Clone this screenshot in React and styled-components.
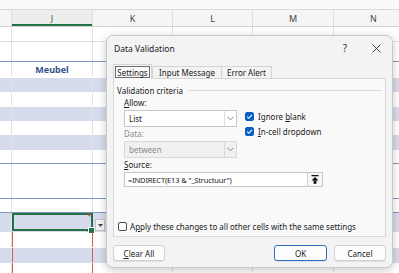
import React from 'react'
import styled, { createGlobalStyle } from 'styled-components'

const FONT = `"Noto Sans", "Open Sans", sans-serif`

const GlobalStyle = createGlobalStyle`
  html, body {
    margin: 0;
    padding: 0;
  }
  body {
    width: 399px;
    height: 273px;
    overflow: hidden;
    background: #ffffff;
    font-family: ${FONT};
  }
`

const COLS = [
  { key: '', w: 12 },
  { key: 'J', w: 81 },
  { key: 'K', w: 80 },
  { key: 'L', w: 80 },
  { key: 'M', w: 81 },
  { key: 'N', w: 80 },
]

const ROWS = [
  { h: 15, line: 'grid' },
  { h: 20, line: 'blue' },
  { h: 16, title: 'Meubel' },
  { h: 14, band: true },
  { h: 15 },
  { h: 14, band: true },
  { h: 14 },
  { h: 15, band: true },
  { h: 14, line: 'blue' },
  { h: 17 },
  { h: 18, line: 'blue' },
  { h: 14, line: 'blue' },
  { h: 19, band: true, active: true },
  { h: 16, marked: true },
  { h: 15, band: true, marked: true },
  { h: 12, marked: true },
]

function Check() {
  return (
    <svg width="9" height="9" viewBox="0 0 9 9">
      <path d="M2.2 4.7 L3.8 6.3 L6.9 2.9" fill="none" stroke="#fff" strokeWidth="1.1" />
    </svg>
  )
}

function Chevron() {
  return (
    <svg width="7" height="5" viewBox="0 0 7 5">
      <path d="M0.5 0.8 L3.5 3.8 L6.5 0.8" fill="none" stroke="#7a7a7a" strokeWidth="0.9" />
    </svg>
  )
}

function Key({ children }) {
  return <U>{children}</U>
}

function App() {
  return (
    <Page>
      <GlobalStyle />
      <Sheet>
        <TopStrip />
        <HeaderRow>
          {COLS.map((c, i) => (
            <HeaderCell key={i} $w={c.w} $active={c.key === 'J'}>{c.key}</HeaderCell>
          ))}
        </HeaderRow>
        {ROWS.map((r, ri) => (
          <Row key={ri} $h={r.h} $band={r.band} $line={r.line}>
            {COLS.map((c, ci) => (
              <Cell
                key={ci}
                $w={c.w}
                $marked={r.marked && c.key === 'J'}
                $title={r.title && c.key === 'J'}
              >
                {r.title && c.key === 'J' ? r.title : null}
                {r.active && c.key === 'J' && (
                  <>
                    <ActiveBox />
                    <RedCorner $top />
                    <RedCorner />
                    <FillHandle />
                    <CellDrop>
                      <svg width="5" height="3" viewBox="0 0 5 3">
                        <path d="M0 0 L5 0 L2.5 3 Z" fill="#444" />
                      </svg>
                    </CellDrop>
                  </>
                )}
              </Cell>
            ))}
          </Row>
        ))}
      </Sheet>

      <Dialog>
        <TitleBar>
          <Title>Data Validation</Title>
          <TitleButton>?</TitleButton>
          <TitleButton $close>
            <svg width="9" height="9" viewBox="0 0 9 9">
              <path d="M0.5 0.5 L8.5 8.5 M8.5 0.5 L0.5 8.5" stroke="#333" strokeWidth="0.9" />
            </svg>
          </TitleButton>
        </TitleBar>

        <Tabs>
          <Tab $selected><Focus>Settings</Focus></Tab>
          <Tab $w={70}>Input Message</Tab>
          <Tab $w={50}>Error Alert</Tab>
        </Tabs>

        <Panel>
          <Legend>
            <span>Validation criteria</span>
            <LegendLine />
          </Legend>

          <Criteria>
            <Columns>
              <LeftCol>
                <Label><Key>A</Key>llow:</Label>
                <Select>
                  <SelectText>List</SelectText>
                  <SelectArrow><Chevron /></SelectArrow>
                </Select>
                <Label $muted>Data:</Label>
                <Select $disabled>
                  <SelectText $muted>between</SelectText>
                  <SelectArrow $disabled><Chevron /></SelectArrow>
                </Select>
              </LeftCol>
              <RightCol>
                <CheckRow>
                  <Box $checked><Check /></Box>
                  <span>Ignore <Key>b</Key>lank</span>
                </CheckRow>
                <CheckRow>
                  <Box $checked><Check /></Box>
                  <span><Key>I</Key>n-cell dropdown</span>
                </CheckRow>
              </RightCol>
            </Columns>
            <Label $source><Key>S</Key>ource:</Label>
            <SourceInput>
              <SourceText>=INDIRECT(E13 &amp; "_Structuur")</SourceText>
              <Collapse>
                <svg width="8" height="9" viewBox="0 0 8 9">
                  <rect x="0.5" y="0" width="7" height="1.3" fill="#111" />
                  <path d="M4 2 L7.5 5.6 L0.5 5.6 Z" fill="#111" />
                  <rect x="2.6" y="5.4" width="2.8" height="3.4" fill="#111" />
                </svg>
              </Collapse>
            </SourceInput>
          </Criteria>

          <ApplyRow>
            <Box />
            <span>A<Key>p</Key>ply these changes to all other cells with the same settings</span>
          </ApplyRow>
        </Panel>

        <Buttons>
          <Button><Key>C</Key>lear All</Button>
          <Spacer />
          <Button $primary>OK</Button>
          <Button>Cancel</Button>
        </Buttons>
      </Dialog>
    </Page>
  )
}

const Page = styled.div`
  position: relative;
  width: 399px;
  height: 273px;
  overflow: hidden;
`

const Sheet = styled.div`
  width: 399px;
  overflow: hidden;
  font-family: ${FONT};
`

const TopStrip = styled.div`
  height: 10px;
  background: #fafafa;
  border-bottom: 1px solid #dadada;
  box-sizing: border-box;
`

const HeaderRow = styled.div`
  display: flex;
  height: 17px;
  background: #f5f5f5;
  border-bottom: 1px solid #d2d2d2;
  box-sizing: border-box;
`

const HeaderCell = styled.div`
  flex: 0 0 ${p => p.$w}px;
  box-sizing: border-box;
  border-right: 1px solid #dedede;
  display: flex;
  align-items: center;
  justify-content: center;
  font-size: 9px;
  color: ${p => (p.$active ? '#217346' : '#444')};
  box-shadow: ${p => (p.$active ? 'inset 0 -2px 0 #217346' : 'none')};
  background: ${p => (p.$active ? '#eceeec' : 'transparent')};
`

const Row = styled.div`
  display: flex;
  height: ${p => p.$h}px;
  box-sizing: border-box;
  background: ${p => (p.$band ? '#d6dcec' : '#ffffff')};
  border-bottom: 1px solid
    ${p => (p.$line === 'blue' ? '#8096c6' : p.$line === 'grid' ? '#dedede' : 'transparent')};
`

const Cell = styled.div`
  position: relative;
  flex: 0 0 ${p => p.$w}px;
  box-sizing: border-box;
  border-right: 1px solid ${p => (p.$marked ? '#e05555' : '#e2e2e2')};
  box-shadow: ${p => (p.$marked ? 'inset 1px 0 #e05555' : 'none')};
  display: flex;
  align-items: center;
  justify-content: center;
  font-size: 9px;
  font-weight: ${p => (p.$title ? 700 : 400)};
  color: #34508c;
`

const ActiveBox = styled.div`
  position: absolute;
  left: 0;
  top: 0;
  right: -1px;
  bottom: 0;
  border: 2px solid #217346;
`

const FillHandle = styled.div`
  position: absolute;
  right: -3px;
  bottom: -3px;
  width: 5px;
  height: 5px;
  background: #217346;
  border: 1px solid #fff;
`

const RedCorner = styled.div`
  position: absolute;
  right: 2px;
  ${p => (p.$top ? 'top: 1px;' : 'bottom: -1px;')}
  width: 0;
  height: 0;
  border-left: 3px solid transparent;
  border-${p => (p.$top ? 'top' : 'bottom')}: 3px solid #e0303a;
`

const CellDrop = styled.div`
  position: absolute;
  left: 83px;
  top: 6px;
  width: 10px;
  height: 12px;
  box-sizing: border-box;
  background: #f3f3f3;
  border: 1px solid #c4c4c4;
  display: flex;
  align-items: center;
  justify-content: center;
`

const Dialog = styled.div`
  position: absolute;
  left: 106px;
  top: 35px;
  width: 287px;
  height: 233px;
  box-sizing: border-box;
  background: #f3f3f3;
  border: 1px solid #c9c9c9;
  border-radius: 7px;
  box-shadow: 0 2px 8px rgba(0, 0, 0, 0.22);
  padding: 0 6px;
  display: flex;
  flex-direction: column;
  font-family: ${FONT};
  font-size: 8px;
  color: #1a1a1a;
`

const TitleBar = styled.div`
  display: flex;
  align-items: center;
  height: 24px;
  margin-right: -6px;
`

const Title = styled.div`
  flex: 1;
  font-size: 8.5px;
  padding-left: 1px;
`

const TitleButton = styled.div`
  width: ${p => (p.$close ? 32 : 30)}px;
  height: 24px;
  display: flex;
  align-items: center;
  justify-content: center;
  font-size: 10px;
  color: #333;
`

const Tabs = styled.div`
  display: flex;
  align-items: flex-end;
  height: 15px;
  margin-top: 4px;
  margin-bottom: -1px;
  position: relative;
  z-index: 1;
`

const Tab = styled.div`
  box-sizing: border-box;
  width: ${p => (p.$selected ? 39 : p.$w)}px;
  height: ${p => (p.$selected ? 15 : 13)}px;
  display: flex;
  align-items: center;
  justify-content: center;
  border: 1px solid #d4d4d4;
  border-bottom: ${p => (p.$selected ? 'none' : '1px solid #d4d4d4')};
  border-left: ${p => (p.$selected || p.$w === 70 ? '' : 'none')};
  background: ${p => (p.$selected ? '#f9f9f9' : '#f3f3f3')};
  padding: ${p => (p.$selected ? '1px 1px 0' : '0')};
`

const Focus = styled.div`
  flex: 1;
  align-self: stretch;
  display: flex;
  align-items: center;
  justify-content: center;
  border: 1px solid #6b6b6b;
  margin-bottom: 1px;
`

const Panel = styled.div`
  height: 159px;
  box-sizing: border-box;
  border: 1px solid #d9d9d9;
  background: #f9f9f9;
  display: flex;
  flex-direction: column;
  padding: 5px 3px 5px 3px;
`

const Legend = styled.div`
  display: flex;
  align-items: center;
  height: 12px;
  gap: 5px;

  span {
    white-space: nowrap;
  }
`

const LegendLine = styled.div`
  flex: 1;
  height: 1px;
  background: #dcdcdc;
`

const Criteria = styled.div`
  padding-left: 7px;
  display: flex;
  flex-direction: column;
`

const Columns = styled.div`
  display: flex;
`

const LeftCol = styled.div`
  width: 113px;
  display: flex;
  flex-direction: column;
`

const RightCol = styled.div`
  margin-left: 8px;
  padding-top: 15px;
  display: flex;
  flex-direction: column;
  gap: 5px;
`

const Label = styled.div`
  height: 12px;
  line-height: 12px;
  margin: 1px 0;
  color: ${p => (p.$muted ? '#8b8b8b' : '#1a1a1a')};
`

const U = styled.span`
  text-decoration: underline;
  text-underline-offset: 1px;
`

const Select = styled.div`
  display: flex;
  height: 17px;
  box-sizing: border-box;
  border: 1px solid ${p => (p.$disabled ? '#d8d8d8' : '#c6c6c6')};
  background: ${p => (p.$disabled ? '#f0f0f0' : '#ffffff')};
`

const SelectText = styled.div`
  flex: 1;
  display: flex;
  align-items: center;
  padding-left: 4px;
  color: ${p => (p.$muted ? '#8b8b8b' : '#1a1a1a')};
`

const SelectArrow = styled.div`
  width: 11px;
  display: flex;
  align-items: center;
  justify-content: center;
  border-left: 1px solid ${p => (p.$disabled ? '#d8d8d8' : '#e0e0e0')};
  background: ${p => (p.$disabled ? '#f0f0f0' : '#ffffff')};
`

const CheckRow = styled.div`
  display: flex;
  align-items: center;
  height: 10px;
  gap: 4px;
  white-space: nowrap;
`

const Box = styled.div`
  width: 9px;
  height: 9px;
  box-sizing: border-box;
  border-radius: 2px;
  flex: 0 0 9px;
  display: flex;
  background: ${p => (p.$checked ? '#0860c4' : '#ffffff')};
  border: 1px solid ${p => (p.$checked ? '#0860c4' : '#4a4a4a')};

  svg {
    margin: -1px;
  }
`

const SourceInput = styled.div`
  display: flex;
  width: 199px;
  height: 15px;
  box-sizing: border-box;
  border: 1px solid #c6c6c6;
  background: #ffffff;
`

const SourceText = styled.div`
  flex: 1;
  display: flex;
  align-items: center;
  padding-left: 3px;
  white-space: nowrap;
  font-size: 7.6px;
  letter-spacing: -0.2px;
`

const Collapse = styled.div`
  width: 14px;
  display: flex;
  align-items: center;
  justify-content: center;
  border-left: 1px solid #d0d0d0;
  background: #f7f7f7;
`

const ApplyRow = styled.div`
  margin-top: auto;
  display: flex;
  align-items: center;
  height: 10px;
  gap: 3px;
  padding-left: 1px;
  white-space: nowrap;
`

const Buttons = styled.div`
  display: flex;
  gap: 7px;
  margin-top: 8px;
`

const Spacer = styled.div`
  flex: 1;
`

const Button = styled.div`
  width: ${p => (p.$primary ? 53 : 52)}px;
  height: 16px;
  box-sizing: border-box;
  display: flex;
  align-items: center;
  justify-content: center;
  background: #fdfdfd;
  border-radius: 3px;
  border: 1px solid ${p => (p.$primary ? '#2b6fc4' : '#d0d0d0')};
  box-shadow: 0 1px 0 rgba(0, 0, 0, 0.08);
`

export default App
